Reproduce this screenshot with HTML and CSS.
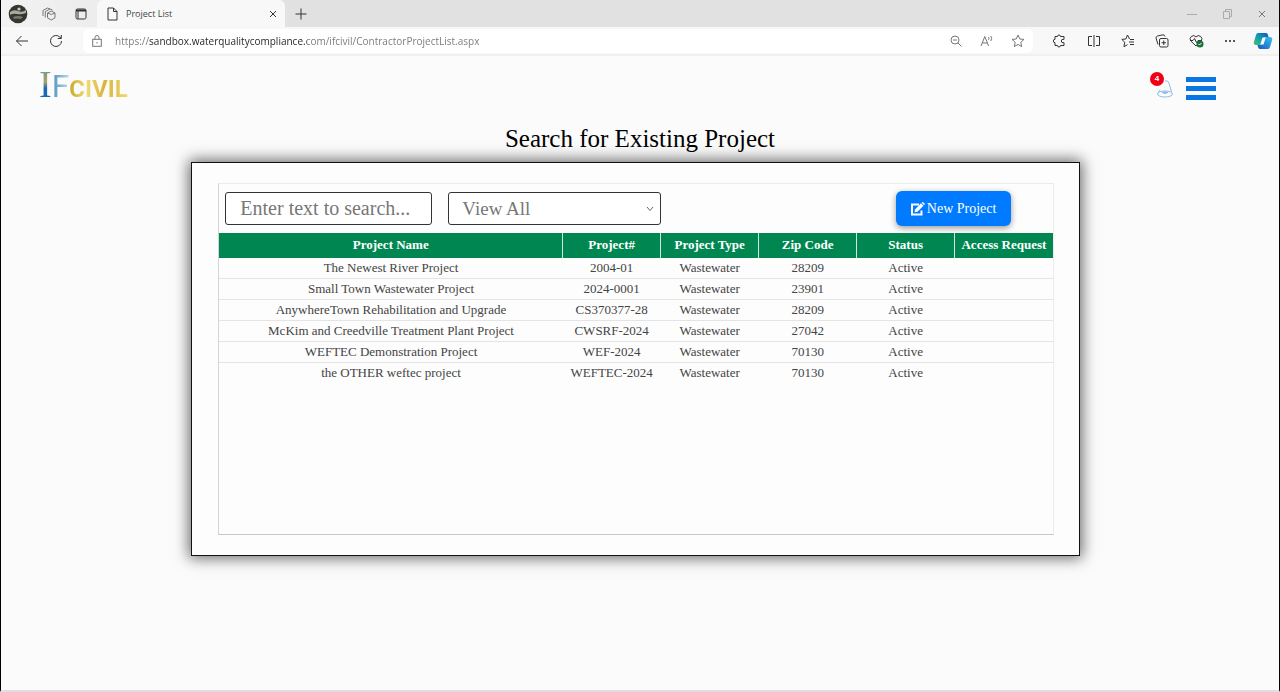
FILE: index.html
```html
<!DOCTYPE html>
<html lang="en">
<head>
    <meta charset="UTF-8">
    <meta name="viewport" content="width=device-width, initial-scale=1.0">
    <title>Project List</title>
    <link rel="stylesheet" href="styles.css">
</head>
<body>
    <div class="window">
        <!-- Tab strip -->
        <div class="tab-strip">
            <button class="chrome-btn profile" aria-label="Profile">
                <svg width="20" height="20" viewBox="0 0 20 20">
                    <circle cx="10" cy="10" r="9.3" fill="#34362f"/>
                    <path d="M2 8q4-3 8-1t8-1v3q-5 2-9 1t-7 1z" fill="#a9aaa2"/>
                    <path d="M5 13q5-2 10 0l-2 2q-4-1-7 0z" fill="#77786f"/>
                    <circle cx="11" cy="5" r="1.6" fill="#c8c8c0"/>
                </svg>
            </button>
            <button class="chrome-btn" aria-label="Workspaces">
                <svg class="line" width="14" height="14" viewBox="0 0 14 14">
                    <path d="M5.500 6l3.800-2L13 6v4.800l-3.700 2.200-3.800-2.200zM5.500 6l3.800 1.500L13 6"/>
                    <path d="M3.300 10.500V4.500L8 2l2.500 1M1 9V3.500L5.500 1 8 2"/>
                </svg>
            </button>
            <button class="chrome-btn" aria-label="Tab actions">
                <svg class="dark" width="12" height="12" viewBox="0 0 12 12">
                    <rect x="1" y="1" width="10" height="10" rx="1.5"/>
                    <path d="M1 2.500h10" stroke-width="2"/>
                    <path d="M3 3v8"/>
                </svg>
            </button>
            <div class="tab">
                <svg class="dark" width="11" height="14" viewBox="0 0 11 14">
                    <path d="M1 1h5.500l3.500 3.500V13H1zM6.500 1v3.500H10"/>
                </svg>
                <span class="tab-title">Project List</span>
                <button class="tab-close" aria-label="Close tab">
                    <svg class="dark" width="8" height="8" viewBox="0 0 8 8"><path d="M1 1l6 6M7 1L1 7"/></svg>
                </button>
            </div>
            <button class="chrome-btn" aria-label="New tab">
                <svg class="dark" width="12" height="12" viewBox="0 0 12 12"><path d="M6 .5v11M.5 6h11"/></svg>
            </button>
            <div class="window-controls">
                <button class="chrome-btn" aria-label="Minimize">
                    <svg class="faint" width="10" height="10" viewBox="0 0 10 10"><path d="M0 5.500h10"/></svg>
                </button>
                <button class="chrome-btn" aria-label="Restore">
                    <svg class="faint" width="10" height="10" viewBox="0 0 10 10"><path d="M1.500 2.500h6v7h-6zM3.500 2.500v-2h6v7h-2"/></svg>
                </button>
                <button class="chrome-btn" aria-label="Close">
                    <svg class="line" width="8" height="8" viewBox="0 0 8 8"><path d="M1 1l6 6M7 1L1 7"/></svg>
                </button>
            </div>
        </div>

        <!-- Address bar -->
        <div class="toolbar">
            <button class="chrome-btn" aria-label="Back">
                <svg class="dark" width="14" height="12" viewBox="0 0 14 12"><path d="M6.500 1L1.500 6l5 5M1.500 6H13"/></svg>
            </button>
            <button class="chrome-btn" aria-label="Refresh">
                <svg class="dark" width="14" height="14" viewBox="0 0 14 14"><path d="M12.500 7A5.500 5.500 0 1 1 10.800 3L12 4.200M12.300 1v3.500H8.800"/></svg>
            </button>
            <div class="address">
                <svg class="line" width="10" height="12" viewBox="0 0 10 12">
                    <rect x=".7" y="4.300" width="8.600" height="7"/>
                    <path d="M3 4.300V2.500a2 2 0 0 1 4 0v1.800M5 7v1.500"/>
                </svg>
                <input type="text" class="url" aria-label="Address" value="https://sandbox.waterqualitycompliance.com/ifcivil/ContractorProjectList.aspx">
                <button class="address-btn" aria-label="Zoom out">
                    <svg class="line" width="12" height="12" viewBox="0 0 12 12"><circle cx="5" cy="5" r="4"/><path d="M8 8l3.500 3.500M3 5h4"/></svg>
                </button>
                <button class="address-btn" aria-label="Read aloud">
                    <svg class="line" width="14" height="12" viewBox="0 0 14 12"><path d="M1 11L4.800 1.500 8.600 11M2.400 8h4.800M8.500 2q1 1.200 0 2.800M10.800 1q1.800 2.400 0 5"/></svg>
                </button>
                <button class="address-btn" aria-label="Favorite">
                    <svg class="line" width="14" height="14" viewBox="0 0 14 14"><path d="M7 1l1.800 4 4.200.4-3.200 2.900.9 4.300L7 10.400l-3.700 2.200.9-4.300L1 5.400 5.200 5z"/></svg>
                </button>
            </div>
            <div class="toolbar-actions">
                <button class="chrome-btn" aria-label="Extensions">
                    <svg class="dark" width="14" height="14" viewBox="0 0 14 14"><path d="M2 2.500h2.500a1.500 1.500 0 0 1 3 0H11v2.800h-1a1.700 1.700 0 0 0 0 3.400h1v2.800H7.500a1.500 1.500 0 0 1-3 0H2V8.700a1.700 1.700 0 0 1 0-3.400z"/></svg>
                </button>
                <button class="chrome-btn" aria-label="Split screen">
                    <svg class="dark" width="14" height="14" viewBox="0 0 14 14"><path d="M5 2.500H1.500v9H5M9 2.500h3.500v9H9M7 1v12"/></svg>
                </button>
                <button class="chrome-btn" aria-label="Favorites">
                    <svg class="dark" width="14" height="14" viewBox="0 0 14 14"><path d="M8.500 5L6.500 1 4.800 5l-4 .4 3 2.900-.9 4.400 3.600-2M9 5.500h4M8 8h5M9 10.500h4"/></svg>
                </button>
                <button class="chrome-btn" aria-label="Collections">
                    <svg class="dark" width="14" height="14" viewBox="0 0 14 14">
                        <rect x="4.500" y="4.500" width="8.500" height="8.500" rx="1.500"/>
                        <path d="M8.750 6.500v4.500M6.500 8.750H11M3 10.500L1 4q0-1.500 1.500-2L8 .8q1.500 0 2 1.700"/>
                    </svg>
                </button>
                <button class="chrome-btn" aria-label="Browser essentials">
                    <svg class="dark" width="15" height="14" viewBox="0 0 15 14">
                        <path d="M7 12L1.800 7a3.200 3.200 0 0 1 5.200-4 3.200 3.200 0 0 1 5.200 4zM1 6.500h3l1.500-2 2 4 1.500-2h3"/>
                        <circle cx="11" cy="10" r="3.500" fill="#17713c" stroke="none"/>
                        <path d="M9.500 10l1 1 2-2" stroke="#fff"/>
                    </svg>
                </button>
                <button class="chrome-btn" aria-label="Settings and more">
                    <svg width="12" height="4" viewBox="0 0 12 4" fill="#222"><circle cx="2" cy="2" r="1"/><circle cx="6" cy="2" r="1"/><circle cx="10" cy="2" r="1"/></svg>
                </button>
                <button class="chrome-btn copilot" aria-label="Copilot">
                    <svg width="20" height="18" viewBox="0 0 20 18">
                        <defs>
                            <linearGradient id="copilotLeft" x1="0" y1="1" x2="1" y2="0">
                                <stop offset="0" stop-color="#47c46c"/><stop offset=".5" stop-color="#129bb4"/><stop offset="1" stop-color="#1352b8"/>
                            </linearGradient>
                            <linearGradient id="copilotRight" x1="0" y1="1" x2="1" y2="0">
                                <stop offset="0" stop-color="#1753c5"/><stop offset="1" stop-color="#36c4ee"/>
                            </linearGradient>
                        </defs>
                        <path d="M5 1h8q1.500 0 2 2l.5 2h-3q-1.500 0-2 1.500L8.500 13H3Q0 13 1 9.500L3 3q.6-2 2-2z" fill="url(#copilotLeft)"/>
                        <path d="M15 17H7q-1.500 0-2-2l-.5-2h3q1.500 0 2-1.500L11.500 5H17q3 0 2 3.500L17 15q-.6 2-2 2z" fill="url(#copilotRight)"/>
                        <path d="M9.500 5.500h3.300l-2.300 7H7.300z" fill="#f4fbff"/>
                    </svg>
                </button>
            </div>
        </div>

        <!-- Page -->
        <header class="page-header">
            <a href="#" class="logo" aria-label="IFCIVIL"><span class="logo-i">I</span><span class="logo-f">F</span><span class="logo-civil">CIVIL</span></a>
            <div class="header-actions">
                <button class="alerts" aria-label="Notifications">
                    <svg width="18" height="20" viewBox="0 0 18 20" fill="none" stroke="#8fbdec">
                        <path d="M9 3q3-1 4 2l2.500 9"/>
                        <path d="M4 12l-2 3"/>
                        <ellipse cx="9" cy="16" rx="7.500" ry="3"/>
                        <path d="M6 14.500q3-1.500 6 0-3 2-6 0z" fill="#8fbdec"/>
                    </svg>
                    <span class="badge">4</span>
                </button>
                <button class="menu" aria-label="Menu">
                    <span class="bar"></span>
                    <span class="bar"></span>
                    <span class="bar"></span>
                </button>
            </div>
        </header>

        <h1>Search for Existing Project</h1>

        <div class="content">
            <main class="panel">
                <div class="project-list">
                    <div class="filters">
                        <input type="text" class="search" aria-label="Search" placeholder="Enter text to search...">
                        <div class="select-wrap">
                            <select class="view" aria-label="View">
                                <option>View All</option>
                            </select>
                            <svg class="chevron" width="8" height="6" viewBox="0 0 8 6"><path d="M1 1l3 3.500L7 1"/></svg>
                        </div>
                        <button class="new-project">
                            <svg width="15" height="14" viewBox="0 0 15 14">
                                <path d="M9 2.500H2v10h9.500V8.500" fill="none" stroke="#fff" stroke-width="2"/>
                                <path d="M5 7.500L11 1.300l2.500 2.400L7.500 9.800 4.600 10.300z" fill="#fff"/>
                                <path d="M11.700.7l.6-.5q.6-.4 1.200.2l1 1q.6.600.1 1.200l-.5.6z" fill="#fff"/>
                            </svg>
                            New Project
                        </button>
                    </div>
                    <table>
                        <thead>
                            <tr>
                                <th class="name">Project Name</th>
                                <th>Project#</th>
                                <th>Project Type</th>
                                <th>Zip Code</th>
                                <th>Status</th>
                                <th>Access Request</th>
                            </tr>
                        </thead>
                        <tbody>
                            <tr><td>The Newest River Project</td><td>2004-01</td><td>Wastewater</td><td>28209</td><td>Active</td><td></td></tr>
                            <tr><td>Small Town Wastewater Project</td><td>2024-0001</td><td>Wastewater</td><td>23901</td><td>Active</td><td></td></tr>
                            <tr><td>AnywhereTown Rehabilitation and Upgrade</td><td>CS370377-28</td><td>Wastewater</td><td>28209</td><td>Active</td><td></td></tr>
                            <tr><td>McKim and Creedville Treatment Plant Project</td><td>CWSRF-2024</td><td>Wastewater</td><td>27042</td><td>Active</td><td></td></tr>
                            <tr><td>WEFTEC Demonstration Project</td><td>WEF-2024</td><td>Wastewater</td><td>70130</td><td>Active</td><td></td></tr>
                            <tr><td>the OTHER weftec project</td><td>WEFTEC-2024</td><td>Wastewater</td><td>70130</td><td>Active</td><td></td></tr>
                        </tbody>
                    </table>
                </div>
            </main>
        </div>
    </div>
</body>
</html>
```
FILE: styles.css
```css
* {
    box-sizing: border-box;
}
body {
    margin: 0;
    background-color: #fbfbfb;
    font-family: "Liberation Serif", serif;
}
button {
    padding: 0;
    border: none;
    background: none;
    font-family: inherit;
    cursor: pointer;
}
.window {
    min-height: 100vh;
    border: 1px solid #000;
    border-top: none;
    border-bottom: 2px solid #dfdfe1;
}

/* Browser chrome */
.tab-strip {
    display: flex;
    align-items: center;
    height: 27px;
    padding-left: 2px;
    background: linear-gradient(to right, #f2f2f2, #e1e1e1 300px);
}
.chrome-btn {
    display: flex;
    align-items: center;
    justify-content: center;
    width: 34px;
    height: 26px;
}
.tab-strip .chrome-btn {
    width: 32px;
}
.tab-strip .profile {
    width: 30px;
}
.line, .dark, .faint {
    fill: none;
    stroke: #777;
}
.dark {
    stroke: #333;
}
.faint {
    stroke: #aaa;
}
.tab {
    display: flex;
    align-items: center;
    gap: 8px;
    width: 188px;
    height: 27px;
    padding: 0 8px 0 10px;
    background-color: #f8f8f8;
    border-radius: 6px 6px 0 0;
}
.tab-title {
    flex: 1;
    color: #444;
    font: 9px "Open Sans", sans-serif;
}
.tab-close {
    display: flex;
}
.window-controls {
    display: flex;
    margin-left: auto;
}
.window-controls .chrome-btn {
    width: 35px;
}
.toolbar {
    display: flex;
    align-items: center;
    height: 29px;
    padding-left: 4px;
    background-color: #f8f8f8;
    border-bottom: 2px solid #f0f0f0;
}
.address {
    display: flex;
    flex: 1;
    align-items: center;
    height: 24px;
    margin-left: 10px;
    margin-right: 10px;
    padding-left: 9px;
    border-radius: 6px;
    background-color: #fff;
}
.url {
    flex: 1;
    min-width: 0;
    margin-left: 13px;
    padding: 0;
    border: none;
    outline: none;
    /* host name is darker than the rest of the address */
    background: linear-gradient(to right, #777 34px, #222 34px, #222 192px, #777 192px);
    -webkit-background-clip: text;
    background-clip: text;
    color: transparent;
    font: 10px "Open Sans", sans-serif;
}
.address-btn {
    display: flex;
    justify-content: center;
    width: 31px;
}
.toolbar-actions {
    display: flex;
}
.toolbar-actions .copilot {
    width: 32px;
}

/* Page header */
.page-header {
    display: flex;
    align-items: center;
    justify-content: space-between;
    height: 64px;
    padding: 0 63px 0 38px;
}
.logo {
    display: flex;
    align-items: baseline;
    margin-bottom: 4px;
    text-decoration: none;
}
.logo span {
    -webkit-background-clip: text;
    background-clip: text;
    color: transparent;
}
.logo-i {
    background-image: linear-gradient(#5c8fa8, #a9a667 45%, #1769b8 60%, #1769b8);
    font: 38px/40px "Liberation Serif", serif;
}
.logo-f {
    background-image: linear-gradient(to right, #4e91bd, #b8dcec);
    font: 32px/40px Roboto, sans-serif;
}
.logo-civil {
    background-image: linear-gradient(to right, #c9a62c, #efdc72 30%, #d9b43a 60%, #f1d768);
    font: bold 24px/40px Roboto, sans-serif;
}
.header-actions {
    display: flex;
    align-items: center;
    gap: 12px;
}
.alerts {
    display: flex;
    position: relative;
}
.badge {
    position: absolute;
    top: -6px;
    left: -6px;
    width: 14px;
    height: 14px;
    border-radius: 50%;
    background-color: #f00014;
    color: #fff;
    font: bold 8px/14px "Liberation Sans", sans-serif;
}
.menu {
    display: flex;
    flex-direction: column;
    gap: 4px;
}
.bar {
    width: 30px;
    height: 5px;
    background-color: #0877e3;
}

h1 {
    margin: 4px 0 8px;
    color: #000;
    font-size: 25px;
    font-weight: normal;
    line-height: 30px;
    text-align: center;
}

/* Project list */
.content {
    padding-right: 9px;
}
.panel {
    width: 70%;
    margin: 0 auto;
    padding: 20px 25px 20px 26px;
    background-color: #fdfdfd;
    border: 1px solid #111;
    box-shadow: 0 0 14px 2px rgba(0, 0, 0, 0.6);
}
.project-list {
    min-height: 352px;
    border: 1px solid #ececec;
    border-left-color: #d4d4d4;
    border-bottom-color: #c8c8c8;
}
.filters {
    display: flex;
    align-items: center;
    gap: 16px;
    height: 49px;
    padding: 0 42px 0 6px;
}
.search, .view {
    height: 33px;
    padding: 0 14px;
    border: 1px solid #333;
    border-radius: 3px;
    background-color: #fff;
    color: #777;
    font: 20px "Liberation Serif", serif;
}
.search {
    width: 207px;
}
.search::placeholder {
    color: #777;
}
.select-wrap {
    display: flex;
    position: relative;
    width: 213px;
}
.view {
    width: 100%;
    padding: 0 10px 0 13px;
    appearance: none;
    font-size: 19px;
}
.chevron {
    position: absolute;
    top: 14px;
    right: 7px;
    fill: none;
    stroke: #666;
    pointer-events: none;
}
.new-project {
    display: flex;
    align-items: center;
    justify-content: center;
    gap: 2px;
    width: 115px;
    height: 35px;
    margin-left: auto;
    border-radius: 6px;
    background-color: #007bff;
    box-shadow: 0 2px 6px rgba(0, 0, 0, 0.4);
    color: #fff;
    font-size: 14px;
}
table {
    width: 100%;
    border-collapse: collapse;
    table-layout: fixed;
}
th {
    width: 98px;
    height: 25px;
    padding: 0 0 2px;
    border-left: 1px solid #cfe8dc;
    background-color: #008751;
    color: #fff;
    font-size: 13px;
    line-height: 20px;
    white-space: nowrap;
}
th.name {
    width: auto;
    border-left: none;
}
td {
    padding: 0;
    border-bottom: 1px solid #e4e4e4;
    color: #444;
    font-size: 13px;
    line-height: 20px;
    text-align: center;
}
tbody tr:last-child td {
    border-bottom: none;
}
```
